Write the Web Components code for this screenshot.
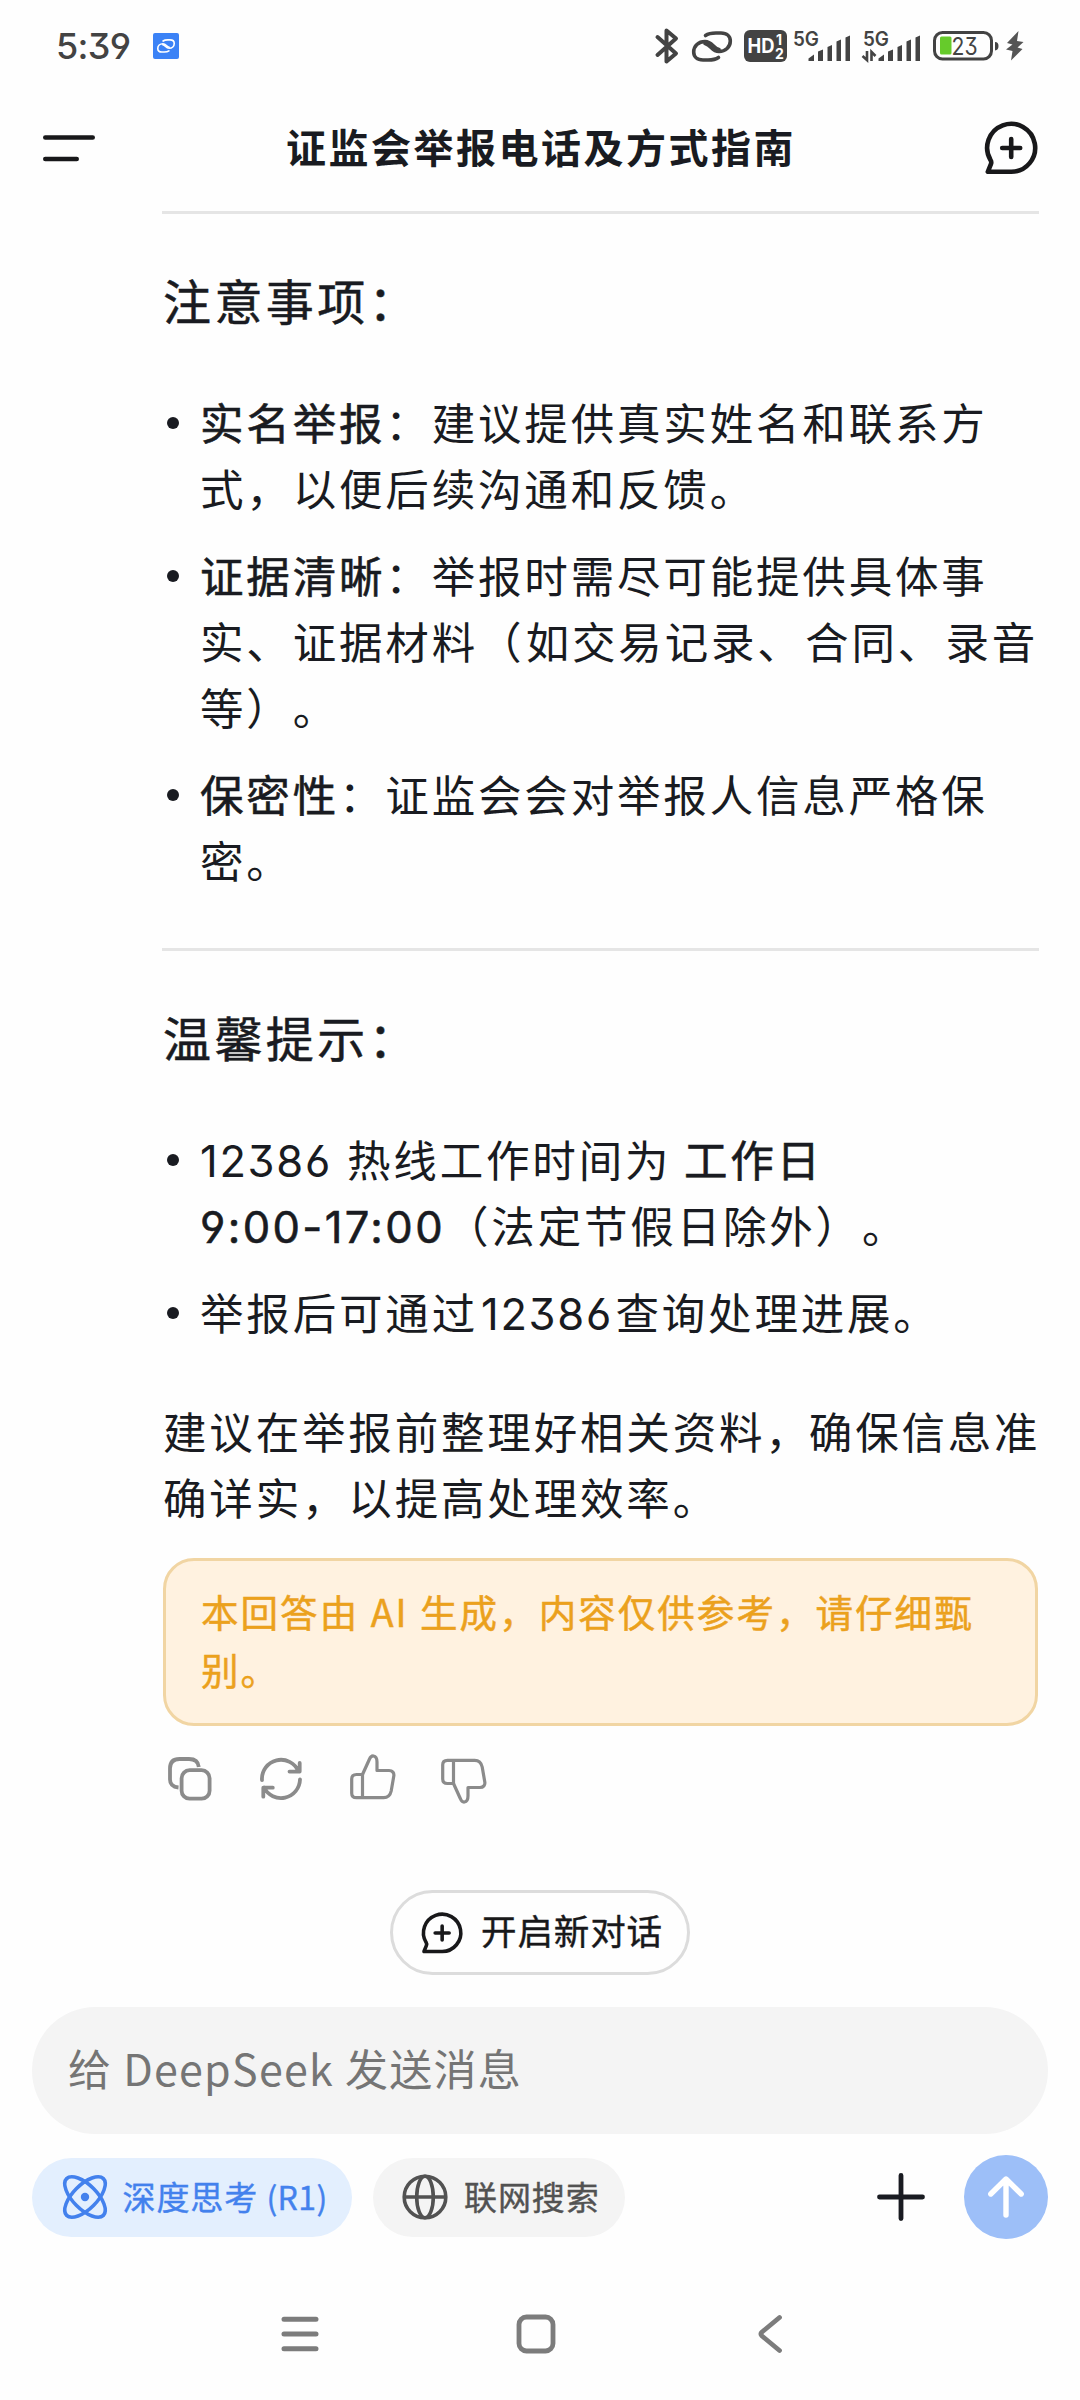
<!DOCTYPE html>
<html lang="zh-CN">
<head>
<meta charset="utf-8">
<title>证监会举报电话及方式指南</title>
<style>
    body {
        margin: 0;
        background: #fefefe;
        font-family: "Noto Sans CJK SC", sans-serif;
        text-spacing-trim: space-all;
        font-feature-settings: "chws" 0, "halt" 0;
        color: #191b21;
    }
</style>
</head>
<body>
<chat-app></chat-app>

<script>
// name: [width, height, svg content]
const ICONS = {
    link: [40, 31, `<g fill="none" stroke="currentColor" stroke-width="3.600" stroke-linecap="round"><path d="M13.500 4.500C16 2.700 20 2 24 2h5c6 0 9.300 3.500 9.300 8 0 6-4.800 10.500-11.300 10.500-7.500 0-7.500-6.500-14-8"/><path transform="rotate(180 20 15.500)" d="M13.500 4.500C16 2.700 20 2 24 2h5c6 0 9.300 3.500 9.300 8 0 6-4.800 10.500-11.300 10.500-7.500 0-7.500-6.500-14-8"/></g>`],
    bluetooth: [24, 36, `<path d="M2.500 9 21 25.500 11.500 33.500V2.500L21 10.500 2.500 27" fill="none" stroke="currentColor" stroke-width="4" stroke-linejoin="round" stroke-linecap="round"/>`],
    hd: [43, 32, `<rect width="43" height="32" rx="6" fill="currentColor"/><g fill="#fff" font-family="Inter" font-weight="700"><text x="3.500" y="23" font-size="20" textLength="27" lengthAdjust="spacingAndGlyphs">HD</text><text x="32" y="15" font-size="14">1</text><text x="31" y="28.500" font-size="14">2</text></g>`],
    signal: [58, 30, `<text x="0" y="15" font-size="20" font-family="Inter" font-weight="600" fill="currentColor" textLength="26" lengthAdjust="spacingAndGlyphs">5G</text><path d="M15.500 30v-2.500l5.500-4V30zM25 30V20.500l5-2V30zM34.500 30V16l4.500-2V30zM43.500 30V10.500l4.500-2V30zM52.500 30V6.500l4.500-2V30z" fill="currentColor"/>`],
    signaldata: [58, 30, `<text x="0" y="15" font-size="20" font-family="Inter" font-weight="600" fill="currentColor" textLength="26" lengthAdjust="spacingAndGlyphs">5G</text><path d="M15.500 30v-2.500l5.500-4V30zM25 30V20.500l5-2V30zM34.500 30V16l4.500-2V30zM43.500 30V10.500l4.500-2V30zM52.500 30V6.500l4.500-2V30z" fill="currentColor"/><path d="M4 20v9L-.5 25M8.500 30v-9l4 4" fill="none" stroke="currentColor" stroke-width="2.600"/>`],
    battery: [66, 30, `<rect x="1.500" y="1.500" width="57" height="26.500" rx="8" fill="none" stroke="currentColor" stroke-width="3"/><rect x="7" y="5.500" width="11.500" height="18" rx="1.500" fill="#66cb2b"/><path d="M62 11q3.500 0 3.500 4t-3.500 4.500z" fill="currentColor"/><text x="18.500" y="23.500" font-size="24" font-family="Inter" fill="currentColor" textLength="26" lengthAdjust="spacingAndGlyphs" style="font-feature-settings:'cv09'">23</text>`],
    bolt: [18, 30, `<path d="M12.500 0 1 12l5.500 1.500L0 18.500l6.500 1.500L5 29.500 16.500 18l-5-1.500L17.500 11l-6.500-1z" fill="#555"/>`],
    menu: [52, 27, `<path d="M2.300 2.500h47.400M2.300 24h31.400" stroke="currentColor" stroke-width="4.600" stroke-linecap="round"/>`],
    newchat: [54, 54, `<path d="M3.800 50.800H27.300A24 24 0 1 0 6.500 39Q7.800 41 6.900 43.200ZM27.200 18v18M18.200 27h18" fill="none" stroke="currentColor" stroke-width="4.600" stroke-linejoin="round" stroke-linecap="round"/>`],
    copy: [44, 44, `<g fill="none" stroke="currentColor" stroke-width="3.800"><rect x="13.600" y="13.200" width="28" height="28.500" rx="8"/><path d="M10.500 30.500C5 30 2 27.500 2 22.500V11.500Q2 2 11.500 2H21q9 0 9.800 8"/></g>`],
    refresh: [42, 42, `<path d="M2 22.200A19 19 0 0 1 38.500 13.500M29.500 13.600h10.200V5M40 21.500A19 19 0 0 1 4 29.500M12.800 29.700H3.300v9" fill="none" stroke="currentColor" stroke-width="3.800" stroke-linecap="round" stroke-linejoin="round"/>`],
    like: [46, 46, `<g fill="none" stroke="currentColor" stroke-width="3.200" stroke-linejoin="round"><path d="M12.500 20.500 19.300 5.500C20.500 2.500 22 1.800 23.500 2c2.500.4 3.500 3.500 3.500 6v8.500h12c3.500 0 5.300 2.500 4.800 5.500l-2.600 15c-1 4.500-3.500 6.700-7.500 6.700H6.500q-4.800 0-4.800-4.500V25q0-4.500 4.800-4.500z"/><path d="M12.500 20.500v23"/></g>`],
    globe: [46, 46, `<g fill="none" stroke="currentColor" stroke-width="3.600"><circle cx="23" cy="23" r="20.800"/><ellipse cx="23" cy="23" rx="8.300" ry="20.800"/><path d="M2 23h42"/></g>`],
    atom: [44, 44, `<g fill="none" stroke="currentColor" stroke-width="3.600"><ellipse cx="22" cy="22" rx="26" ry="12" transform="rotate(45 22 22)"/><ellipse cx="22" cy="22" rx="26" ry="12" transform="rotate(-45 22 22)"/></g><circle cx="22" cy="22" r="4.200" fill="currentColor"/>`],
    plus: [48, 48, `<path d="M24 2.500v43M2.500 24h43" stroke="currentColor" stroke-width="4.800" stroke-linecap="round"/>`],
    send: [36, 42, `<path d="M18 39V4M2.800 18 18 3l15.200 15" fill="none" stroke="currentColor" stroke-width="5.400" stroke-linecap="round" stroke-linejoin="round"/>`],
    recents: [38, 36, `<path d="M3 3.300h32M3 18h32M3 32.700h32" stroke="currentColor" stroke-width="5" stroke-linecap="round"/>`],
    home: [40, 40, `<rect x="3" y="3" width="34" height="34" rx="7.500" fill="none" stroke="currentColor" stroke-width="4.800"/>`],
    back: [26, 40, `<path d="M22.500 3.500 5 18q-2 2 0 4L22.500 36.500" fill="none" stroke="currentColor" stroke-width="4.800" stroke-linecap="round" stroke-linejoin="round"/>`]
};

class UiIcon extends HTMLElement {
    constructor() {
        super();
        this.attachShadow({mode: 'open'});
    }

    connectedCallback() {
        const [w, h, body] = ICONS[this.getAttribute('name')];
        const size = Number(this.getAttribute('size')) || w;
        this.shadowRoot.innerHTML = `
            <style>
                :host { display: block; flex: none; }
                svg { display: block; overflow: visible; }
            </style>
            <svg width="${size}" height="${size * h / w}" viewBox="0 0 ${w} ${h}">${body}</svg>`;
    }
}

// registers an element whose shadow root is cloned from the given markup
function define(name, html) {
    const template = document.createElement('template');
    template.innerHTML = html;
    customElements.define(name, class extends HTMLElement {
        constructor() {
            super();
            this.attachShadow({mode: 'open'});
            this.shadowRoot.appendChild(template.content.cloneNode(true));
        }
    });
}

customElements.define('ui-icon', UiIcon);

define('status-bar', `
    <style>
        :host {
            display: flex;
            align-items: center;
            height: 92px;
            padding: 0 56px;
            box-sizing: border-box;
            color: #434343;
        }
        .time {
            font: 500 36px/40px Inter, sans-serif;
            font-feature-settings: "cv09", "cv04";
            letter-spacing: -.7px;
            width: 97px;
        }
        .app {
            width: 26px;
            height: 26px;
            border-radius: 2px;
            background: #3b82f6;
            color: #fff;
            display: grid;
            place-items: center;
            margin-right: auto;
        }
    </style>
    <span class="time">5:39</span>
    <span class="app"><ui-icon name="link" size="18"></ui-icon></span>
    <ui-icon name="bluetooth" style="margin-right:13px"></ui-icon>
    <ui-icon name="link" style="margin-right:12px"></ui-icon>
    <ui-icon name="hd" style="margin-right:6px"></ui-icon>
    <ui-icon name="signal" style="margin-right:12px"></ui-icon>
    <ui-icon name="signaldata" style="margin-right:12px"></ui-icon>
    <ui-icon name="battery" style="margin-right:7px"></ui-icon>
    <ui-icon name="bolt"></ui-icon>
`);

define('chat-header', `
    <style>
        :host {
            display: flex;
            align-items: center;
            justify-content: space-between;
            height: 112px;
            padding: 0 42px 0 43px;
            color: #18181a;
        }
        .title {
            font-size: 40px;
            font-weight: 700;
            line-height: 60px;
            letter-spacing: 2.5px;
            color: #191b21;
            margin: -5px 0 0 3px;
        }
    </style>
    <ui-icon name="menu"></ui-icon>
    <span class="title"><slot></slot></span>
    <ui-icon name="newchat"></ui-icon>
`);

define('answer-heading', `
    <style>
        :host {
            display: block;
            font-size: 48px;
            -webkit-text-stroke: .5px currentColor;
            line-height: 66px;
            letter-spacing: 3.4px;
            white-space: nowrap;
        }
    </style>
    <slot></slot>
`);

define('answer-rule', `
    <style>
        :host {
            display: block;
            height: 3px;
            margin: 0 -1px;
            background: #e5e5e5;
        }
    </style>
`);

define('answer-list', `
    <style>
        :host {
            display: flex;
            flex-direction: column;
            gap: 21px;
        }
    </style>
    <slot></slot>
`);

define('answer-item', `
    <style>
        :host {
            display: flex;
            align-items: flex-start;
            white-space: nowrap;
        }
        .dot {
            flex: none;
            width: 12px;
            height: 12px;
            border-radius: 50%;
            background: #191b21;
            margin: 28px 21px 0 4px;
        }
    </style>
    <span class="dot"></span>
    <div><slot></slot></div>
`);

define('answer-notice', `
    <style>
        :host {
            display: block;
            box-sizing: border-box;
            height: 168px;
            padding: 21px 35px;
            border: 3px solid #f1d5a3;
            border-radius: 31px;
            background: #fff2e0;
            color: #eba11d;
            font-size: 37.5px;
            -webkit-text-stroke: .5px currentColor;
            line-height: 58px;
            letter-spacing: 2.05px;
            white-space: nowrap;
        }
    </style>
    <slot></slot>
`);

define('answer-actions', `
    <style>
        :host {
            display: flex;
            align-items: center;
            height: 46px;
            padding-left: 5px;
            color: #8b8b8b;
        }
        .down { transform: scaleY(-1); }
    </style>
    <ui-icon name="copy" style="margin-right:48px"></ui-icon>
    <ui-icon name="refresh" style="margin-right:48px"></ui-icon>
    <ui-icon name="like" style="margin:-4px 45px 0 0"></ui-icon>
    <ui-icon name="like" class="down" style="margin-top:4px"></ui-icon>
`);

define('new-chat-button', `
    <style>
        :host {
            display: flex;
            align-items: center;
            gap: 18px;
            box-sizing: border-box;
            width: 300px;
            height: 85px;
            padding-left: 28px;
            border: 3px solid #dcdcdc;
            border-radius: 43px;
            color: #18181a;
            font-size: 35.5px;
            -webkit-text-stroke: .4px currentColor;
            letter-spacing: .9px;
            white-space: nowrap;
        }
        span { margin-top: -6px; }
    </style>
    <ui-icon name="newchat" size="42"></ui-icon>
    <span><slot></slot></span>
`);

define('message-field', `
    <style>
        :host {
            display: flex;
            align-items: center;
            height: 127px;
            padding: 0 36px 7px;
            box-sizing: border-box;
            border-radius: 64px;
            background: #f4f4f4;
            color: #757575;
            font-size: 43px;
            letter-spacing: 1.25px;
            white-space: nowrap;
        }
    </style>
    <span><slot></slot></span>
`);

define('tool-chip', `
    <style>
        :host {
            display: flex;
            align-items: center;
            gap: 16px;
            box-sizing: border-box;
            width: 252px;
            height: 79px;
            padding-left: 29px;
            border-radius: 40px;
            background: #f4f4f4;
            color: #525252;
            font-size: 33px;
            -webkit-text-stroke: .4px currentColor;
            letter-spacing: .9px;
            white-space: nowrap;
        }
        :host([active]) {
            width: 320px;
            padding-left: 30.5px;
            background: #e3effe;
            color: #4381ed;
        }
        span { margin-top: -3px; }
    </style>
    <slot name="icon"></slot>
    <span><slot></slot></span>
`);

define('send-button', `
    <style>
        :host {
            display: grid;
            place-items: center;
            width: 84px;
            height: 84px;
            border-radius: 50%;
            background: #9dbff8;
            color: #fff;
        }
    </style>
    <ui-icon name="send"></ui-icon>
`);

define('nav-bar', `
    <style>
        :host {
            display: flex;
            align-items: center;
            padding-left: 281px;
            height: 40px;
            color: #7c7c7c;
        }
    </style>
    <ui-icon name="recents"></ui-icon>
    <ui-icon name="home" style="margin:0 201px 0 197px"></ui-icon>
    <ui-icon name="back"></ui-icon>
`);

define('chat-app', `
    <style>
        :host {
            display: flex;
            flex-direction: column;
            height: 2400px;
            overflow: hidden;
        }
        main {
            margin: 7px 42px 0 163px;
            font-size: 43.5px;
            line-height: 66px;
            letter-spacing: 2.83px;
            height: 1590px;
        }
        answer-heading { margin: 51px 0 56.500px; }
        p {
            margin: 53px 0 28.500px;
            white-space: nowrap;
        }
        b {
            font-weight: 400;
            -webkit-text-stroke: .6px currentColor;
        }
        .num {
            font-family: Inter, sans-serif;
            font-feature-settings: "cv09", "cv03", "cv04";
            line-height: 1;
            letter-spacing: 1.7px;
        }
        b .num { letter-spacing: 2.400px; }
        .in-text { margin: 0 2.5px 0 3px; }
        .lead { margin-right: 2.500px; }
        .wide { letter-spacing: 4.200px; }
        .comma { letter-spacing: 0; }
        .ai { margin: 0 1px; }
        .latin { letter-spacing: .4px; font-size: 32px; }
        answer-rule + answer-heading { margin-top: 52px; }
        answer-list + answer-rule { margin-top: 55.500px; }
        answer-actions { margin-top: 30px; }
        new-chat-button { margin: 89px auto 0 390px; }
        message-field { margin: 32px 32px 0; }
        .tools {
            display: flex;
            align-items: center;
            margin: 21px 32px 0;
        }
        .tools tool-chip { margin-right: 21px; }
        .tools ui-icon[name=plus] { margin: 0 39px 0 auto; }
        nav-bar { margin-top: 75px; }
    </style>
    <status-bar></status-bar>
    <chat-header>证监会举报电话及方式指南</chat-header>
    <main>
        <answer-rule></answer-rule>
        <answer-heading>注意事项：</answer-heading>
        <answer-list>
            <answer-item><b>实名举报</b>：建议提供真实姓名和联系方<br>式，以便后续沟通和反馈。</answer-item>
            <answer-item><b>证据清晰</b>：举报时需尽可能提供具体事<br>实、证据材料<span class="wide">（</span>如交易记录<span class="wide">、</span>合同<span class="wide">、</span>录音<br>等）。</answer-item>
            <answer-item><b>保密性</b>：证监会会对举报人信息严格保<br>密。</answer-item>
        </answer-list>
        <answer-rule></answer-rule>
        <answer-heading>温馨提示：</answer-heading>
        <answer-list>
            <answer-item><span class="num lead">12386</span> 热线工作时间为 <b>工作日<br><span class="num">9:00-17:00</span></b>（法定节假日除外）。</answer-item>
            <answer-item>举报后可通过<span class="num in-text">12386</span>查询处理进展。</answer-item>
        </answer-list>
        <p>建议在举报前整理好相关资料<span class="comma">，</span>确保信息准<br>确详实，以提高处理效率。</p>
        <answer-notice>本回答由 <span class="ai">AI</span> 生成，内容仅供参考，请仔细甄<br>别。</answer-notice>
        <answer-actions></answer-actions>
    </main>
    <new-chat-button>开启新对话</new-chat-button>
    <message-field>给 DeepSeek 发送消息</message-field>
    <div class="tools">
        <tool-chip active><ui-icon slot="icon" name="atom"></ui-icon>深度思考 <span class="latin">(R1)</span></tool-chip>
        <tool-chip><ui-icon slot="icon" name="globe"></ui-icon>联网搜索</tool-chip>
        <ui-icon name="plus"></ui-icon>
        <send-button></send-button>
    </div>
    <nav-bar></nav-bar>
`);
</script>
</body>
</html>
